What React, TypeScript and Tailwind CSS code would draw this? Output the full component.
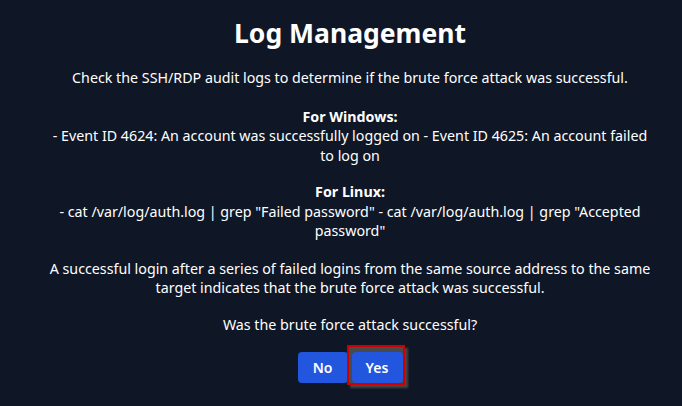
export default function App() {
  return (
    <div className="min-h-[406px] w-full bg-[#0f1727] pl-[18px] font-['Noto_Sans',sans-serif] text-white">
      <div className="mx-auto flex w-[606px] flex-col items-center pt-[15px] text-center">
        <h1 className="text-[26.5px] font-bold leading-[36px]">Log Management</h1>
        <div className="mt-[17px] text-[14.25px] leading-[19.5px]">
          <p>Check the SSH/RDP audit logs to determine if the brute force attack was successful.</p>
          <p className="mt-[19px] font-bold">For Windows:</p>
          <p>
            - Event ID 4624: An account was successfully logged on - Event ID 4625: An account failed to log on
          </p>
          <p className="mt-[17px] font-bold">For Linux:</p>
          <p>
            - cat /var/log/auth.log | grep "Failed password" - cat /var/log/auth.log | grep "Accepted password"
          </p>
          <p className="mt-[18px]">
            A successful login after a series of failed logins from the same source address to the same target
            indicates that the brute force attack was successful.
          </p>
          <p className="mt-[17px]">Was the brute force attack successful?</p>
        </div>
        <div className="mt-[18px] flex gap-[4px]">
          <button className="h-[31px] w-[50px] rounded-[4px] bg-[#2356df] text-[14px] font-semibold">No</button>
          <span className="relative">
            {/* focus ring */}
            <span className="absolute -left-[5px] -top-[7px] h-[40px] w-[58px] border-2 border-[#cc0000] bg-[#4a4a4a] shadow-[3px_3px_2px_#454545]" />
            <button className="relative h-[31px] w-[51px] rounded-[4px] bg-[#2356df] text-[14px] font-semibold">
              Yes
            </button>
          </span>
        </div>
      </div>
    </div>
  );
}
